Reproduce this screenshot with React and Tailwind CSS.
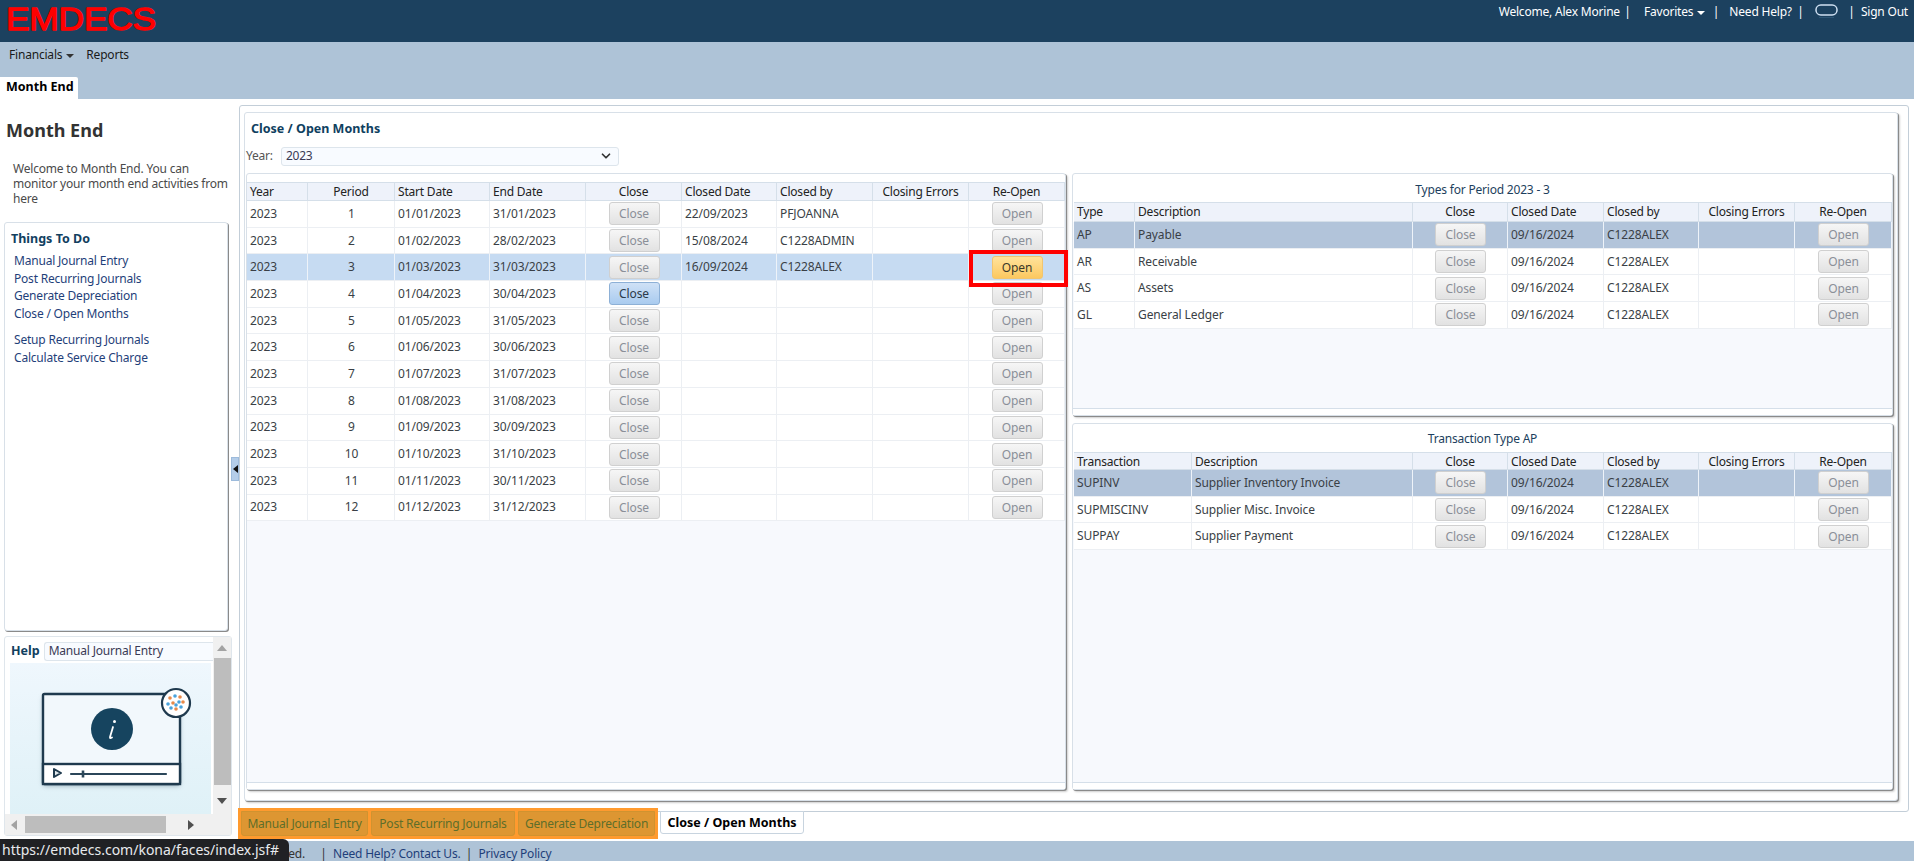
import React from 'react';
import { ChevronDown } from 'lucide-react';

const L = 'grid grid-cols-[61px_87px_95px_96px_96px_95px_96px_96px_96px]';
const T = 'grid grid-cols-[61px_278px_95px_96px_95px_96px_97px]';
const B = 'grid grid-cols-[118px_221px_95px_96px_95px_96px_97px]';

function Btn({ label, kind }) {
  const k =
    kind === 'blue'
      ? 'border-[#8db0d6] bg-gradient-to-b from-[#cfe1f6] to-[#a9cbef] text-[#2b3a4a]'
      : kind === 'yellow'
      ? 'border-[#f2c56e] bg-gradient-to-b from-[#ffe39a] to-[#fcc85f] text-[#3a3a2a]'
      : 'border-[#d0d0d0] bg-gradient-to-b from-[#f6f6f6] to-[#e2e2e2] text-[#8a8f98]';
  return (
    <button className={`w-[51px] h-[23px] rounded-[3px] border text-[12px] leading-[19px] ${k}`}>{label}</button>
  );
}

function Head({ cols, names, aligns, h }) {
  return (
    <div className={`${cols} ${h} bg-[#eef2fa] border-y border-[#d5dfe9] text-[#222] text-[12px]`}>
      {names.map((n, i) => (
        <div key={i} className={`px-[3px] flex items-center border-r border-[#d5dfe9] whitespace-nowrap ${aligns[i] ? 'justify-center' : ''}`}>{n}</div>
      ))}
    </div>
  );
}

function Row({ cols, cells, aligns, bg }) {
  return (
    <div className={`${cols} h-[26.7px] text-[12px] tracking-[-0.1px] text-[#3a3f46] border-b border-[#eceff3] ${bg || 'bg-white'}`}>
      {cells.map((c, i) => (
        <div key={i} className={`flex items-center border-r whitespace-nowrap ${bg ? 'border-[#eef3f9]' : 'border-[#eceff3]'} ${aligns[i] ? 'justify-center pl-[4px] pr-[3px]' : 'px-[3px]'}`}>{c}</div>
      ))}
    </div>
  );
}

const leftNames = ['Year', 'Period', 'Start Date', 'End Date', 'Close', 'Closed Date', 'Closed by', 'Closing Errors', 'Re-Open'];
const leftAligns = [0, 1, 0, 0, 1, 0, 0, 1, 1];
const ends = ['31/01/2023', '28/02/2023', '31/03/2023', '30/04/2023', '31/05/2023', '30/06/2023', '31/07/2023', '31/08/2023', '30/09/2023', '31/10/2023', '30/11/2023', '31/12/2023'];
const closed = { 1: ['22/09/2023', 'PFJOANNA'], 2: ['15/08/2024', 'C1228ADMIN'], 3: ['16/09/2024', 'C1228ALEX'] };
const rightAligns = [0, 0, 1, 0, 0, 1, 1];

function Panel({ className, children }) {
  return (
    <div className={`flex flex-col bg-white border border-[#d8e0e8] rounded-[3px] shadow-[1px_1px_0_#8a8a8a,2px_2px_2px_#cfcfcf] ${className}`}>
      {children}
    </div>
  );
}

function Strip() {
  return (
    <>
      <div className="flex-1 bg-[#f7f9fd]" />
      <div className="h-[7px] bg-white border-t border-[#d5dfe9]" />
    </>
  );
}

function RightTable({ cols, title, names, rows, className, headH, titleClass }) {
  return (
    <Panel className={className}>
      <div className={`h-[28px] flex items-center justify-center text-[12px] text-[#1d3f5e] ${titleClass}`}>{title}</div>
      <div className="pl-[1px]"><Head cols={cols} names={names} aligns={rightAligns} h={headH} /></div>
      <div className="pl-[1px] bg-[#f7f9fd]">
        {rows.map((r, i) => (
          <Row
            key={r[0]}
            cols={cols}
            aligns={rightAligns}
            bg={i === 0 ? 'bg-[#b2c4da]' : ''}
            cells={[r[0], r[1], <Btn label="Close" />, '09/16/2024', 'C1228ALEX', '', <Btn label="Open" />]}
          />
        ))}
      </div>
      <Strip />
    </Panel>
  );
}

function Caret({ color = '#333' }) {
  return <span className="inline-block ml-[4px] align-middle border-x-[4px] border-x-transparent border-t-[4px]" style={{ borderTopColor: color }} />;
}

function Bar({ className }) {
  return <span className={`w-[1px] flex justify-center ${className}`}>|</span>;
}

function HelpArt() {
  return (
    <svg width="201" height="151" viewBox="0 0 201 151" className="block">
      <defs>
        <linearGradient id="hg" x1="0" y1="0" x2="0" y2="1">
          <stop offset="0" stopColor="#eff7fd" />
          <stop offset="1" stopColor="#dff1f7" />
        </linearGradient>
        <filter id="blur" x="-20%" y="-20%" width="140%" height="140%"><feGaussianBlur stdDeviation="2.5" /></filter>
      </defs>
      <rect width="201" height="151" fill="url(#hg)" />
      <rect x="33" y="33" width="137" height="90" rx="2" fill="#6b8494" opacity=".6" filter="url(#blur)" />
      <rect x="33" y="31" width="137" height="90" rx="1.5" fill="#f2f8fc" stroke="#1f3a4e" strokeWidth="2.4" />
      <rect x="33" y="101" width="137" height="20" fill="#fff" stroke="#1f3a4e" strokeWidth="2.4" />
      <circle cx="102" cy="66" r="21" fill="#16445f" />
      <path d="M103 64 L100 74 Q99.5 76 102 74.5" stroke="#fff" strokeWidth="1.8" fill="none" strokeLinecap="round" />
      <circle cx="104.5" cy="58.5" r="1.5" fill="#fff" />
      <path d="M44 106 L51 110 L44 114 Z" fill="#dfe6ea" stroke="#1f3a4e" strokeWidth="2" strokeLinejoin="round" />
      <line x1="61" y1="111" x2="156" y2="111" stroke="#2b4659" strokeWidth="2.2" strokeLinecap="round" />
      <line x1="73" y1="107.5" x2="73" y2="114.5" stroke="#2b4659" strokeWidth="2.6" />
      <circle cx="166" cy="40" r="14" fill="#fff" stroke="#1f3a4e" strokeWidth="2.2" />
      {[[160,35,'#e98a4a'],[165,33,'#4aa3dc'],[170,34,'#e98a4a'],[173,39,'#e98a4a'],[169,39,'#4aa3dc'],[163,40,'#e98a4a'],[158,41,'#4aa3dc'],[161,45,'#4aa3dc'],[166,46,'#e98a4a'],[171,44,'#4aa3dc'],[166,42,'#4aa3dc']].map(([x, y, c], i) => (
        <circle key={i} cx={x} cy={y} r="1.8" fill={c} />
      ))}
    </svg>
  );
}

function Tri({ d }) {
  const p = { u: 'M1 8 L6 2 L11 8 Z', n: 'M1 2 L6 8 L11 2 Z', l: 'M8 0 L2 5 L8 10 Z', r: 'M2 0 L8 5 L2 10 Z' }[d];
  const fill = d === 'u' || d === 'l' ? '#a3a3a3' : '#505050';
  return <svg width="12" height="10" viewBox="0 0 12 10"><path d={p} fill={fill} /></svg>;
}

export default function App() {
  return (
    <div className="relative w-[1914px] h-[861px] overflow-hidden bg-white flex flex-col font-['Noto_Sans',sans-serif] text-[12px] tracking-[-0.2px] text-[#333]">
      {/* header */}
      <header className="h-[42px] bg-[#1c415f] flex justify-between text-white text-[12px] shrink-0">
        <svg width="170" height="42" viewBox="0 0 170 42" className="block">
          <text x="6" y="29.5" fontFamily="'Liberation Sans', sans-serif" fontWeight="400" fontSize="31" fill="#ff0000" stroke="#ff0000" strokeWidth="1.3" strokeLinejoin="round" textLength="150" lengthAdjust="spacingAndGlyphs">EMDECS</text>
        </svg>
        <div className="flex h-[24px] items-center pr-[6px] whitespace-nowrap">
          <span>Welcome, Alex Morine</span>
          <Bar className="ml-[7px]" />
          <span className="ml-[16px]">Favorites<Caret color="#fff" /></span>
          <Bar className="ml-[10px]" />
          <span className="ml-[13px]">Need Help?</span>
          <Bar className="ml-[8px]" />
          <svg width="24" height="16" viewBox="0 0 24 16" className="ml-[14px]">
            <rect x="1" y="1" width="21" height="10" rx="4.8" fill="none" stroke="#cfe0f2" strokeWidth="1.5" />
            <line x1="4" y1="13.5" x2="19" y2="13.5" stroke="#2d5575" strokeWidth="1" />
          </svg>
          <Bar className="ml-[12px]" />
          <span className="ml-[9px]">Sign Out</span>
        </div>
      </header>

      {/* nav */}
      <nav className="h-[57px] bg-[#aec3d7] relative shrink-0 flex flex-col justify-between text-[#1a1a1a]">
        <div className="flex pl-[9px] pt-[4px] leading-[18px]">
          <span>Financials<Caret /></span>
          <span className="ml-[12px]">Reports</span>
        </div>
        <div className="w-[78px] h-[22px] bg-white rounded-tr-[2px] pl-[6px] font-bold text-black text-[12.5px] tracking-normal leading-[20px]">Month End</div>
      </nav>

      {/* content */}
      <div className="flex-1 flex min-h-0">
        <aside className="w-[239px] shrink-0 relative flex flex-col">
          <h1 className="pl-[6px] pt-[19px] text-[18px] font-bold tracking-normal text-[#333] leading-[25px]">Month End</h1>
          <p className="pl-[13px] pt-[18px] w-[231px] text-[12px] leading-[15px] text-[#4a4a4a]">
            Welcome to Month End. You can monitor your month end activities from here
          </p>
          <div className="ml-[4px] mt-[16px] w-[224px] h-[409px] border border-[#d8e0e8] rounded-[3px] shadow-[1px_1px_0_#8a8a8a] bg-white pl-[6px] pt-[7px]">
            <h2 className="font-bold text-[12.5px] tracking-normal text-[#12405f] leading-[18px]">Things To Do</h2>
            <ul className="pl-[3px] mt-[4px] text-[#1f3f7a] leading-[17.6px]">
              <li>Manual Journal Entry</li>
              <li>Post Recurring Journals</li>
              <li>Generate Depreciation</li>
              <li>Close / Open Months</li>
              <li className="mt-[9px]">Setup Recurring Journals</li>
              <li>Calculate Service Charge</li>
            </ul>
          </div>
          <div className="ml-[4px] mt-[5px] w-[228px] h-[200px] border border-[#dfe6ec] rounded-[3px] bg-white flex">
            <div className="w-[208px] flex flex-col">
              <div className="flex-1 pl-[5px] pt-[5px]">
                <div className="flex items-center h-[19px]">
                  <span className="font-bold text-[12.5px] tracking-normal text-[#12405f] ml-[1px]">Help</span>
                  <div className="ml-[4px] flex-1 h-[19px] rounded-l-[3px] border border-r-0 border-[#dde5ec] bg-[#f8fbff] pl-[4px] leading-[16px] text-[#3a3a55] whitespace-nowrap">Manual Journal Entry</div>
                </div>
                <div className="mt-[2px]"><HelpArt /></div>
              </div>
              <div className="h-[21px] bg-[#f0f0f0] flex items-center">
                <span className="w-[20px] flex justify-center"><Tri d="l" /></span>
                <div className="w-[141px] h-[17px] bg-[#bdbdbd]" />
                <span className="w-[32px] flex justify-end"><Tri d="r" /></span>
              </div>
            </div>
            <div className="w-[18px] bg-[#f0f0f0] flex flex-col items-center">
              <span className="h-[21px] flex items-center"><Tri d="u" /></span>
              <div className="w-[17px] h-[127px] bg-[#bdbdbd]" />
              <span className="h-[31px] flex items-center"><Tri d="n" /></span>
            </div>
          </div>
          <div className="absolute left-[231px] top-[358px] w-[8px] h-[24px] bg-[#b4cde9] border border-[#9dbbdc] flex items-center justify-center">
            <span className="border-y-[4px] border-y-transparent border-r-[5px] border-r-[#111]" />
          </div>
        </aside>

        <main className="flex-1 min-w-0 pt-[6px] pr-[5px]">
          <div className="h-[707px] border border-[#c3ced8] rounded-[3px] pt-[6px] pl-[4px] pr-[10px]">
            <div className="h-[689px] border border-[#d8e0e8] rounded-[3px] shadow-[1px_1px_0_#8a8a8a,2px_2px_2px_#cfcfcf] bg-white pl-[1px]">
              <div className="h-[31px] pt-[1px] flex items-center pl-[5px] font-bold text-[#0f4060] text-[12.5px] tracking-normal">Close / Open Months</div>
              <div className="mt-[1px] h-[22px] flex items-center">
                <span className="text-[#555]">Year:</span>
                <div className="ml-[8px] w-[338px] h-[19px] border border-[#dde5ec] rounded-[3px] bg-[#f8fbff] flex items-center justify-between pl-[4px] pr-[5px] text-[#3a3a55]">
                  <span>2023</span>
                  <ChevronDown size={14} strokeWidth={3} color="#333" />
                </div>
              </div>
              <div className="mt-[6px] flex gap-[6px]">
                <Panel className="w-[820px] h-[617px] pt-[8px]">
                  <Head cols={L} names={leftNames} aligns={leftAligns} h="h-[19px]" />
                  {ends.map((e, i) => {
                    const n = i + 1;
                    const c = closed[n] || ['', ''];
                    return (
                      <Row
                        key={n}
                        cols={L}
                        aligns={leftAligns}
                        bg={n === 3 ? 'bg-[#c6dbf2]' : ''}
                        cells={[
                          '2023',
                          n,
                          `01/${String(n).padStart(2, '0')}/2023`,
                          e,
                          <Btn label="Close" kind={n === 4 ? 'blue' : ''} />,
                          c[0],
                          c[1],
                          '',
                          <Btn label="Open" kind={n === 3 ? 'yellow' : ''} />,
                        ]}
                      />
                    );
                  })}
                  <Strip />
                </Panel>
                <div className="w-[821px] flex flex-col gap-[7px]">
                  <RightTable
                    className="h-[243px]"
                    cols={T}
                    headH="h-[20px]"
                    titleClass="pt-[4px]"
                    title="Types for Period 2023 - 3"
                    names={['Type', 'Description', 'Close', 'Closed Date', 'Closed by', 'Closing Errors', 'Re-Open']}
                    rows={[['AP', 'Payable'], ['AR', 'Receivable'], ['AS', 'Assets'], ['GL', 'General Ledger']]}
                  />
                  <RightTable
                    className="h-[367px]"
                    cols={B}
                    headH="h-[18px]"
                    titleClass="pt-[2px]"
                    title="Transaction Type AP"
                    names={['Transaction', 'Description', 'Close', 'Closed Date', 'Closed by', 'Closing Errors', 'Re-Open']}
                    rows={[['SUPINV', 'Supplier Inventory Invoice'], ['SUPMISCINV', 'Supplier Misc. Invoice'], ['SUPPAY', 'Supplier Payment']]}
                  />
                </div>
              </div>
            </div>
          </div>
          <div className="flex -mt-[4px] -ml-[1px] h-[31px] items-start">
            <div className="flex gap-[3px] h-[31px] w-[420px] border-[3px] border-[#ff9a2e] bg-[#ff9a2e]">
              {[['w-[127px]', 'Manual Journal Entry'], ['w-[144px]', 'Post Recurring Journals'], ['w-[137px]', 'Generate Depreciation']].map(([w, t]) => (
                <div key={t} className={`${w} shrink-0 h-[25px] bg-[#dd9632] border border-[#cf9330] rounded-b-[3px] text-center text-[#5e6e2a] leading-[23px] whitespace-nowrap`}>{t}</div>
              ))}
            </div>
            <div className="ml-[2px] mt-[3px] w-[144px] h-[23px] bg-white border border-[#c8d4df] rounded-b-[3px] text-center font-bold text-black text-[12.5px] tracking-normal leading-[21px] whitespace-nowrap">Close / Open Months</div>
          </div>
        </main>
      </div>

      {/* footer */}
      <footer className="h-[20px] bg-[#aec3d7] shrink-0 flex items-center pt-[6px] leading-[14px] text-[#1f3f7a] whitespace-nowrap">
        <span className="w-[305px] text-right text-[#333]">All rights reserved.</span>
        <Bar className="ml-[18px] text-[#333]" />
        <span className="ml-[9px]">Need Help? Contact Us.</span>
        <Bar className="ml-[8px] text-[#333]" />
        <span className="ml-[9px]">Privacy Policy</span>
      </footer>

      {/* overlays */}
      <div className="absolute left-[969px] top-[250px] w-[99px] h-[37px] border-4 border-[#ff0000]" />
      <div className="absolute left-0 bottom-0 w-[289px] h-[22px] bg-[#202124] rounded-tr-[6px] pl-[2px] text-[14px] tracking-normal leading-[22px] text-[#e8eaed] whitespace-nowrap">https://emdecs.com/kona/faces/index.jsf#</div>
    </div>
  );
}
